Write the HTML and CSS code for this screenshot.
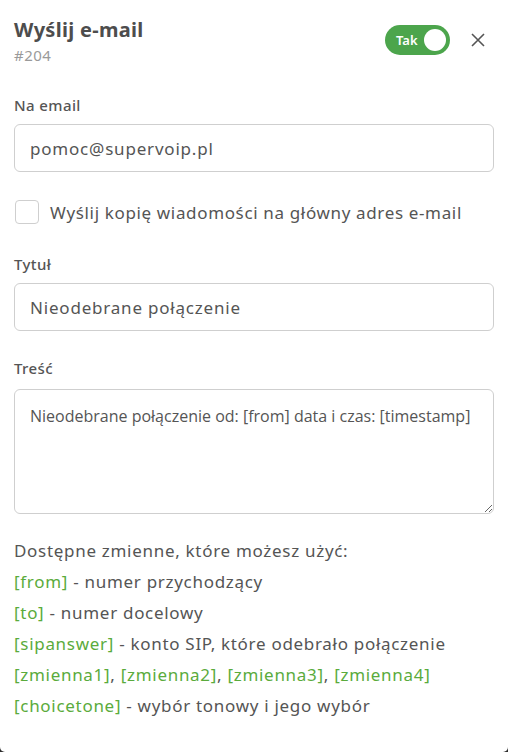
FILE: index.html
```html
<!DOCTYPE html>
<html lang="pl">
<head>
  <meta charset="UTF-8" />
  <meta name="viewport" content="width=device-width, initial-scale=1.0" />
  <title>Wyślij e-mail</title>
  <link rel="stylesheet" href="styles.css">
</head>
<body>
  <div class="okno">
    <div class="okno-header">
      <div class="okno-tytul">
        <h2>Wyślij e-mail</h2>
        <span class="okno-id">#204</span>
      </div>
      <div class="okno-akcje">
        <label class="przelacznik">
          <span class="przelacznik-tekst">Tak</span>
          <span class="przelacznik-kulka"></span>
        </label>
        <button class="zamknij" aria-label="Zamknij">
          <svg width="14" height="14" viewBox="0 0 14 14">
            <path d="M1 1L13 13M13 1L1 13" stroke="#555" stroke-width="1.6" fill="none" />
          </svg>
        </button>
      </div>
    </div>

    <div class="pole pole-pierwsze">
      <label class="etykieta">Na email</label>
      <input class="wejscie" type="text" value="pomoc@supervoip.pl" />
    </div>

    <label class="kopia">
      <span class="kopia-box"></span>
      <span>Wyślij kopię wiadomości na główny adres e-mail</span>
    </label>

    <div class="pole">
      <label class="etykieta">Tytuł</label>
      <input class="wejscie" type="text" value="Nieodebrane połączenie" />
    </div>

    <div class="pole pole-tresc">
      <label class="etykieta">Treść</label>
      <textarea class="tresc">Nieodebrane połączenie od: [from] data i czas: [timestamp]</textarea>
    </div>

    <div class="zmienne">
      <p>Dostępne zmienne, które możesz użyć:</p>
      <p><span class="zm">[from]</span> - numer przychodzący</p>
      <p><span class="zm">[to]</span> - numer docelowy</p>
      <p><span class="zm">[sipanswer]</span> - konto SIP, które odebrało połączenie</p>
      <p><span class="zm">[zmienna1]</span>, <span class="zm">[zmienna2]</span>, <span class="zm">[zmienna3]</span>, <span class="zm">[zmienna4]</span></p>
      <p><span class="zm">[choicetone]</span> - wybór tonowy i jego wybór</p>
    </div>
  </div>
</body>
</html>
```

FILE: styles.css
```css
:root {
  --tekst: #555;
  --tekst-jasny: #9a9a9a;
  --ramka: #cfcfcf;
  --zielony: #4ca54c;
  --zmienna: #5aab3c;
}

html {
  background: #2d2d2d;
}

body {
  margin: 0;
  font-family: 'Noto Sans', sans-serif;
  color: var(--tekst);
}

.okno {
  height: 752px;
  box-sizing: border-box;
  background: #fff;
  border-radius: 0 0 5px 5px;
  padding: 16px 14px 20px 14px;
}

.okno-header {
  display: flex;
  justify-content: space-between;
  align-items: flex-start;
}

.okno-tytul h2 {
  margin: 0;
  font-size: 20px;
  font-weight: 700;
  line-height: 28px;
  letter-spacing: 0.3px;
  color: #4d4d4d;
}

.okno-id {
  display: block;
  margin-top: 1px;
  font-size: 15px;
  line-height: 20px;
  letter-spacing: 0.5px;
  color: var(--tekst-jasny);
}

.okno-akcje {
  display: flex;
  align-items: center;
  gap: 21px;
  margin-top: 9px;
}

.przelacznik {
  width: 65px;
  height: 30px;
  box-sizing: border-box;
  border-radius: 15px;
  background: var(--zielony);
  display: flex;
  align-items: center;
  justify-content: space-between;
  padding: 0 4px 0 11px;
}

.przelacznik-tekst {
  color: #fff;
  font-size: 13px;
  font-weight: 600;
}

.przelacznik-kulka {
  width: 22px;
  height: 22px;
  border-radius: 50%;
  background: #fff;
}

.zamknij {
  background: none;
  border: none;
  padding: 0;
  width: 14px;
  height: 14px;
  margin-right: 9px;
  cursor: pointer;
}

.pole {
  margin-top: 30px;
}

.pole-pierwsze {
  margin-top: 30px;
}

.pole-tresc {
  margin-top: 27px;
}

.etykieta {
  display: block;
  font-size: 15px;
  font-weight: 500;
  line-height: 20px;
  letter-spacing: 0.4px;
  margin-bottom: 9px;
}

.pole-tresc .etykieta {
  margin-bottom: 11px;
}

.wejscie {
  display: block;
  width: 100%;
  height: 48px;
  box-sizing: border-box;
  border: 1px solid var(--ramka);
  border-radius: 6px;
  padding: 0 15px;
  font-family: 'Noto Sans', sans-serif;
  font-size: 17px;
  letter-spacing: 0.8px;
  color: var(--tekst);
}

.kopia {
  display: flex;
  align-items: center;
  gap: 11px;
  margin-top: 28px;
  font-size: 17px;
  letter-spacing: 0.65px;
  padding-left: 1px;
}

.kopia-box {
  width: 22px;
  height: 22px;
  border: 1px solid var(--ramka);
  border-radius: 4px;
}

.tresc {
  display: block;
  width: 100%;
  height: 125px;
  box-sizing: border-box;
  border: 1px solid var(--ramka);
  border-radius: 6px;
  padding: 15px 15px;
  font-family: 'Open Sans', sans-serif;
  font-size: 16px;
  color: var(--tekst);
  resize: vertical;
}

.zmienne {
  margin-top: 21px;
  font-size: 17px;
  letter-spacing: 0.7px;
}

.zmienne p {
  margin: 0;
  line-height: 31px;
}

.zm {
  color: var(--zmienna);
}
```
